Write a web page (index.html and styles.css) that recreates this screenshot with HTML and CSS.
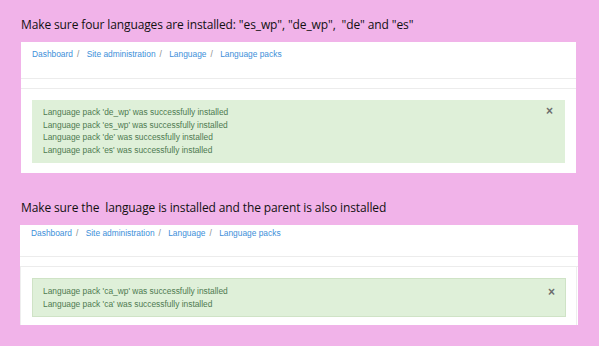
FILE: index.html
```html
<!DOCTYPE html>
<html>
<head lang="en">
<meta charset="UTF-8">
<title>Language packs</title>
<link rel="stylesheet" href="styles.css">
</head>
<body>
<div class="note note-first">Make sure four languages are installed: "es_wp", "de_wp",&nbsp; "de" and "es"</div>
<div class="panel panel-first">
    <div class="crumbs">
        <a href="#">Dashboard</a><span class="sep">/</span>
        <a href="#">Site administration</a><span class="sep">/</span>
        <a href="#">Language</a><span class="sep">/</span>
        <a href="#">Language packs</a>
    </div>
    <div class="gap"></div>
    <div class="content">
        <div class="alert">
            <span class="close">&times;</span>
            <div>Language pack 'de_wp' was successfully installed</div>
            <div>Language pack 'es_wp' was successfully installed</div>
            <div>Language pack 'de' was successfully installed</div>
            <div>Language pack 'es' was successfully installed</div>
        </div>
    </div>
</div>
<div class="note note-second">Make sure the&nbsp; language is installed and the parent is also installed</div>
<div class="panel panel-second">
    <div class="crumbs">
        <a href="#">Dashboard</a><span class="sep">/</span>
        <a href="#">Site administration</a><span class="sep">/</span>
        <a href="#">Language</a><span class="sep">/</span>
        <a href="#">Language packs</a>
    </div>
    <div class="gap"></div>
    <div class="content">
        <div class="alert alert-bordered">
            <span class="close">&times;</span>
            <div>Language pack 'ca_wp' was successfully installed</div>
            <div>Language pack 'ca' was successfully installed</div>
        </div>
    </div>
</div>
</body>
</html>
```

FILE: styles.css
```css
*{
    margin:0;
    padding:0;
    box-sizing:border-box;
}
body{
    background:#f1b3e9;
    width:599px;
    height:346px;
    overflow:hidden;
    font-family:"Liberation Sans",Arial,sans-serif;
}
.note{
    font-family:"Open Sans","Liberation Sans",sans-serif;
    font-size:12px;
    letter-spacing:-0.12px;
    color:#111;
    padding-left:21px;
    line-height:16px;
}
.note-first{
    padding-top:17px;
    height:42px;
}
.note-second{
    padding-top:27px;
    height:52px;
}
.panel{
    background:#fff;
}
.panel-first{
    margin-left:21px;
    width:555px;
    height:131px;
}
.panel-second{
    margin-left:20px;
    width:558px;
    height:100px;
}
.crumbs{
    font-size:8.4px;
    color:#8a8a8a;
    height:37px;
    padding:6px 0 0 11px;
    border-bottom:1px solid #ececec;
    line-height:12px;
}
.panel-second .crumbs{
    padding-top:2px;
    height:32px;
}
.crumbs a{
    color:#3d8fd9;
    text-decoration:none;
}
.crumbs .sep{
    margin:0 5px 0 4px;
}
.gap{
    height:10px;
    border-bottom:1px solid #ececec;
}
.content{
    padding:11px 11px 10px;
}
.panel-second .content{
    border-left:1px solid #eeeeee;
    border-right:1px solid #eeeeee;
    width:557px;
    height:58px;
    padding:11px 10px 7px 11px;
}
.alert{
    position:relative;
    background:#dff0d9;
    color:#4e7a50;
    font-size:8.4px;
    line-height:12.5px;
    padding:6px 11px 6px 11px;
    height:63px;
}
.alert-bordered{
    border:1px solid #cfe3c6;
    height:39px;
    padding:6px 10px 4px;
    line-height:13px;
}
.close{
    position:absolute;
    right:12px;
    top:4px;
    font-size:12px;
    font-weight:bold;
    color:#6c6c6c;
    line-height:14px;
}
.alert-bordered .close{
    right:10px;
    top:6px;
}
```
